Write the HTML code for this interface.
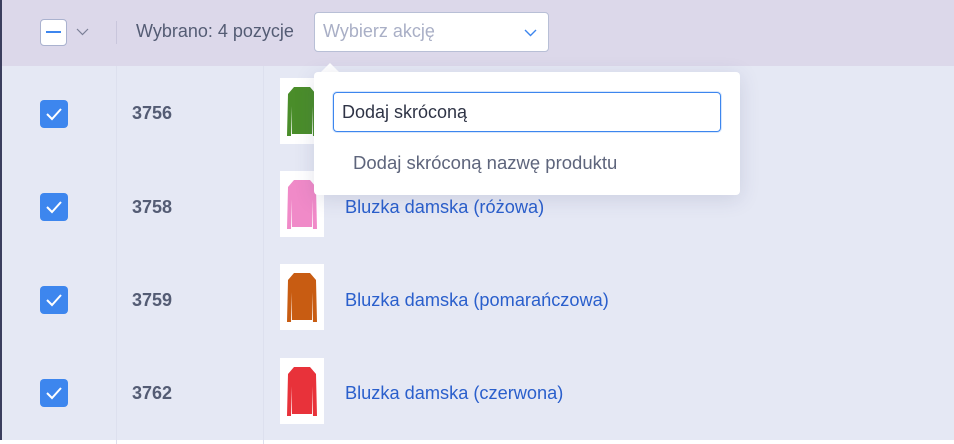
<!DOCTYPE html>
<html><head><meta charset="utf-8"><style>
*{margin:0;padding:0;box-sizing:border-box}
body{width:954px;height:444px;overflow:hidden;background:#fff;font-family:"Source Sans Pro","Liberation Sans",sans-serif;position:relative}
.hdr{position:absolute;left:0;top:0;width:954px;height:66px;background:#dcd8ea}
.body{position:absolute;left:0;top:66px;width:954px;height:374px;background:#e5e8f4}
.lb{position:absolute;left:0;top:0;width:2px;height:440px;background:#3b3e5e}
.vl{position:absolute;top:66px;width:1px;height:378px;background:#dde0ee}
.cb{position:absolute;left:40px;width:28px;height:28px;background:#3d86ee;border-radius:4px}
.cb svg{position:absolute;left:5px;top:6px}
.id{position:absolute;left:132px;font-size:18px;font-weight:bold;color:#545c74}
.img{position:absolute;left:280px;width:44px;height:66px;background:#fff}
.img svg{position:absolute;left:5px;top:6px}
.nm{position:absolute;left:345px;font-size:18.2px;color:#2a5fcc}
</style></head><body>
<div class="hdr">
 <div style="position:absolute;left:40px;top:19px;width:27px;height:27px;background:#fff;border:1px solid #aab2cf;border-radius:4px"><div style="position:absolute;left:5px;top:11px;width:15px;height:2px;background:#3d86ee"></div></div>
 <svg style="position:absolute;left:76px;top:28px" width="13" height="8"><path d="M1 1 L6.5 6.5 L12 1" fill="none" stroke="#7a7f96" stroke-width="1.2"/></svg>
 <div style="position:absolute;left:116px;top:21px;width:1px;height:23px;background:#c9c6dc"></div>
 <div style="position:absolute;left:136px;top:21px;font-size:18px;color:#545c74">Wybrano: 4 pozycje</div>
 <div style="position:absolute;left:314px;top:12px;width:235px;height:40px;background:#fff;border:1px solid #b8bfd6;border-radius:4px">
  <div style="position:absolute;left:8px;top:8px;font-size:18px;color:#a9afc6">Wybierz akcję</div>
  <svg style="position:absolute;left:209px;top:16px" width="13" height="8"><path d="M1 1 L6.5 6.5 L12 1" fill="none" stroke="#3d86ee" stroke-width="1.4"/></svg>
 </div>
</div>
<div class="body"></div>
<div class="lb"></div>
<div class="vl" style="left:116px"></div>
<div class="vl" style="left:263px"></div>

<div class="cb" style="top:100px"><svg width="18" height="16"><path d="M2 8 L7 13 L16 3" fill="none" stroke="#fff" stroke-width="2"/></svg></div>
<div class="id" style="top:103px">3756</div>
<div class="img" style="top:78px"><svg width="34" height="56"><path d="M9 3 L25 3 L31 10 L32 52 L28 52 L27 22 L27 50 L7 50 L7 22 L6 52 L2 52 L3 10 Z" fill="#4a8d2a"/></svg></div>

<div class="cb" style="top:193px"><svg width="18" height="16"><path d="M2 8 L7 13 L16 3" fill="none" stroke="#fff" stroke-width="2"/></svg></div>
<div class="id" style="top:197px">3758</div>
<div class="img" style="top:171px"><svg width="34" height="56"><path d="M9 3 L25 3 L31 10 L32 52 L28 52 L27 22 L27 50 L7 50 L7 22 L6 52 L2 52 L3 10 Z" fill="#f08ac8"/></svg></div>
<div class="nm" style="top:197px">Bluzka damska (różowa)</div>

<div class="cb" style="top:286px"><svg width="18" height="16"><path d="M2 8 L7 13 L16 3" fill="none" stroke="#fff" stroke-width="2"/></svg></div>
<div class="id" style="top:290px">3759</div>
<div class="img" style="top:264px"><svg width="34" height="56"><path d="M9 3 L25 3 L31 10 L32 52 L28 52 L27 22 L27 50 L7 50 L7 22 L6 52 L2 52 L3 10 Z" fill="#c85c12"/></svg></div>
<div class="nm" style="top:290px">Bluzka damska (pomarańczowa)</div>

<div class="cb" style="top:379px"><svg width="18" height="16"><path d="M2 8 L7 13 L16 3" fill="none" stroke="#fff" stroke-width="2"/></svg></div>
<div class="id" style="top:383px">3762</div>
<div class="img" style="top:358px"><svg width="34" height="56"><path d="M9 3 L25 3 L31 10 L32 52 L28 52 L27 22 L27 50 L7 50 L7 22 L6 52 L2 52 L3 10 Z" fill="#e8323a"/></svg></div>
<div class="nm" style="top:383px">Bluzka damska (czerwona)</div>

<svg style="position:absolute;left:318px;top:62px" width="24" height="11"><path d="M2 11 L12 1 L22 11 Z" fill="#fff"/></svg>
<div style="position:absolute;left:314px;top:72px;width:426px;height:123px;background:#fff;border-radius:4px;box-shadow:0 4px 20px rgba(60,70,120,0.15)">
 <div style="position:absolute;left:19px;top:20px;width:388px;height:40px;border:1px solid #3d86ee;border-radius:4px;box-shadow:0 0 0 1px rgba(61,134,238,0.2)">
  <div style="position:absolute;left:8px;top:9px;font-size:18px;color:#2f3446">Dodaj skróconą</div>
 </div>
 <div style="position:absolute;left:39px;top:80px;font-size:18.5px;color:#5e657c">Dodaj skróconą nazwę produktu</div>
</div>
</body></html>
